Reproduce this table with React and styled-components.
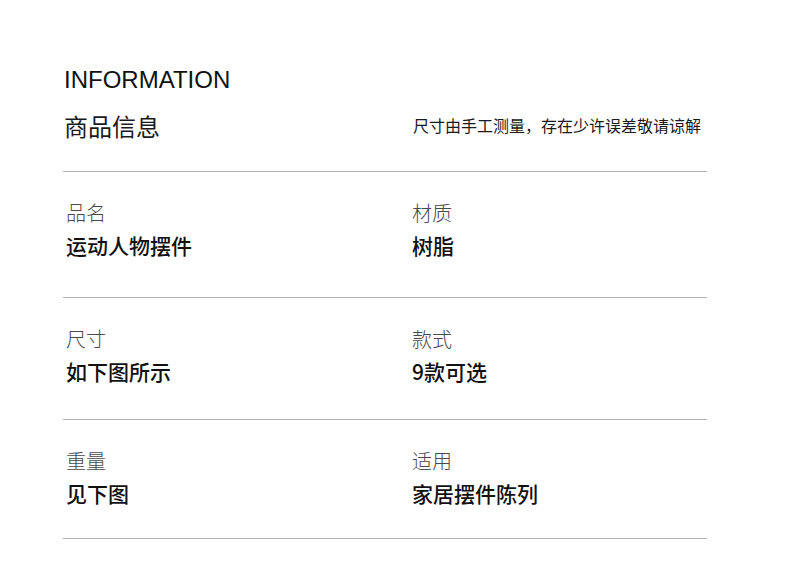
import React from "react";
import styled, { createGlobalStyle } from "styled-components";

const Global = createGlobalStyle`
  html, body { margin: 0; padding: 0; background: #ffffff; }
  body { font-family: "Noto Sans CJK SC", "Noto Sans", sans-serif; }
`;

const Page = styled.div`
  width: 644px;
  padding: 66px 0 0 63px;
`;

const Title = styled.div`
  font-family: "Liberation Sans", Arial, sans-serif;
  font-size: 24px;
  line-height: 28px;
  color: #111;
  padding-left: 1px;
`;

const Grid = styled.div`
  display: grid;
  grid-template-columns: ${(p) => p.$col || 346}px 1fr;
  border-bottom: 1px solid #b3b3b3;
`;

const HeaderRow = styled(Grid)`
  align-items: end;
  padding: 20px 0 33px 1px;
`;

const Heading = styled.div`
  font-size: 24px;
  line-height: 24px;
  color: #1a1a1a;
`;

const Note = styled.div`
  font-size: 16px;
  line-height: 16px;
  color: #1a1a1a;
  padding-bottom: 5px;
`;

const Row = styled(Grid)`
  padding: 31px 0 ${(p) => p.$tail}px 3px;
`;

const Cell = styled.div`
  display: flex;
  flex-direction: column;
  gap: 11px;
`;

const Label = styled.div`
  font-size: 20px;
  line-height: 20px;
  color: #4a4a4a;
  font-weight: 300;
`;

const Value = styled.div`
  font-size: 21px;
  line-height: 23px;
  color: #111;
  font-weight: 500;
`;

const rows = [
  { tail: 40, items: [["品名", "运动人物摆件"], ["材质", "树脂"]] },
  { tail: 36, items: [["尺寸", "如下图所示"], ["款式", "9款可选"]] },
  { tail: 33, items: [["重量", "见下图"], ["适用", "家居摆件陈列"]] },
];

export default function App() {
  return (
    <>
      <Global />
      <Page>
        <Title>INFORMATION</Title>
        <HeaderRow $col={349}>
          <Heading>商品信息</Heading>
          <Note>尺寸由手工测量，存在少许误差敬请谅解</Note>
        </HeaderRow>
        {rows.map((r, i) => (
          <Row key={i} $tail={r.tail}>
            {r.items.map(([k, v]) => (
              <Cell key={k}>
                <Label>{k}</Label>
                <Value>{v}</Value>
              </Cell>
            ))}
          </Row>
        ))}
      </Page>
    </>
  );
}
